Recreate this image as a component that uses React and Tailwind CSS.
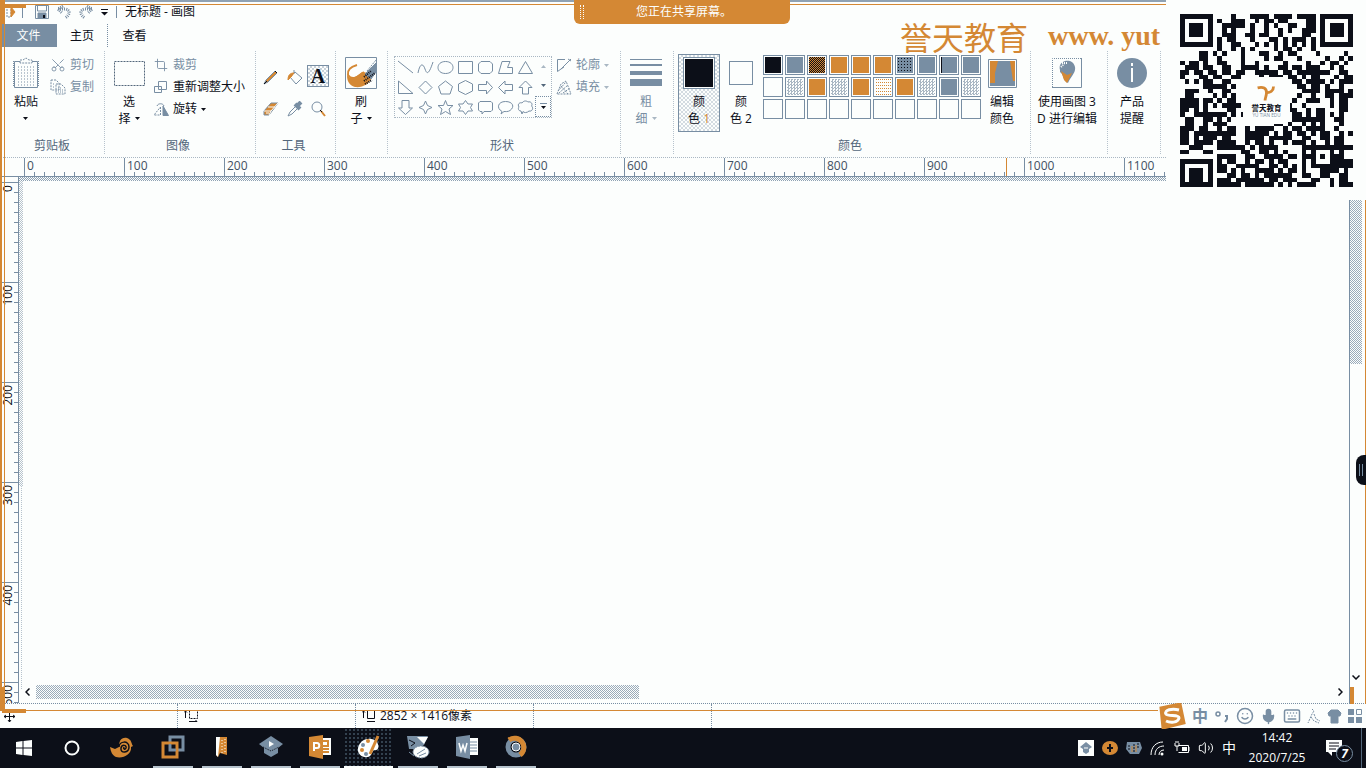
import React from "react";
import { Scissors, Crop, Mic, Keyboard, Smile, Volume2 } from "lucide-react";

const QR = [
  "1111111....1...1111.1111.1111.1111111",
  "1.....1.1..111..1.11.11....11.1.....1",
  "1.111.1..11111.1..1.1..11..11.1.111.1",
  "1.111.1..1.1...1..1..1.1..111.1.111.1",
  "1.111.1..111..11.11..1....11..1.111.1",
  "1.....1.1.11...1...11.1.111.1.1.....1",
  "1111111.1..11...1.1.1.1.1.1.1.1111111",
  "........1..1.1.1....1.11.1..1........",
  "....11.1.1...1...11..1.11....1.....1.",
  "....11..1....1....1.11...1.....1..1.1",
  "1.11.1..11...1..1.....1....1..1.11.1.",
  ".111.11..11..1111.1..11.11.111..1.1..",
  "11.11.11.11.11..11111.11.1111111..11.",
  "1...11.11..11....1.111.11.1.11...1.11",
  ".1.1.11..11..........1..11.1111.1.111",
  ".....11111.1.............11.11.1..1..",
  ".111..1..11...............1111.1111.1",
  ".11....1.1.1.............1..1..11.111",
  "1111.11.1.11............1..111..1.11.",
  "1111.1.1.1111..........1..1.....1.11.",
  "11.1.1....11...........11..1.11...11.",
  "1..1111111.1.1..........11.1.11.1.1..",
  ".11..11.1.1.............1111111..11..",
  ".11..1.111..........11.1..1.1.1...1..",
  "111.11..1.11..1.1111..1.11.1111..1...",
  "11.111111111..11111.1.11.11.1.11..1.1",
  "11.1.111.11...1111.11111..11..11.11..",
  "11.1111.1111..1.11.1..1.111.1..1.11..",
  "..111...111111.1.1111.....11111111111",
  "11...11......11..11.1.1...1.1...1.1..",
  "........1111..11..1111.11.111.1.111..",
  "1111111.1.11..1.11.1.11...1.1...11111",
  "1.....1.11..11111..11.1.1.1.111111111",
  "1.111.1.11.1.1..1111.1.11.1...1111.1.",
  "1.111.1...11.11.1.111111..11..11..11.",
  "1.111.1.111.111111.11.111...11..1.11.",
  "1111111.11111.111111.1.1.1111...1.111",
];

const swatches = [
  "bg-[#0c0f18]", "bg-[#788ea3]", "bg-[repeating-conic-gradient(#0c0f18_0_25%,#d48834_0_50%)] bg-[length:2px_2px]", "bg-[#d48834]", "bg-[#d48834]",
  "bg-[#d48834]", "bg-[radial-gradient(#0c0f18_1px,#788ea3_1px)] bg-[length:3px_3px]", "bg-[#788ea3]", "bg-[#788ea3] border-l border-[#0c0f18]", "bg-[#788ea3]",
  "", "bg-[repeating-conic-gradient(#a9b7c3_0_25%,#fcfefd_0_50%)] bg-[length:3px_3px]", "bg-[#d48834]", "bg-[repeating-conic-gradient(#a9b7c3_0_25%,#fcfefd_0_50%)] bg-[length:3px_3px]", "bg-[#d48834]",
  "bg-[linear-gradient(90deg,#fcfefd_50%,transparent_50%),linear-gradient(#d48834_33%,#fcfefd_33%)] bg-[length:2px_3px]", "bg-[#d48834]", "bg-[repeating-conic-gradient(#a9b7c3_0_25%,#fcfefd_0_50%)] bg-[length:3px_3px]", "bg-[#788ea3]", "bg-[repeating-conic-gradient(#a9b7c3_0_25%,#fcfefd_0_50%)] bg-[length:3px_3px]",
  "", "", "", "", "", "", "", "", "", "",
];

const shapes = [
  ["直线", "M1 1L16 13"],
  ["曲线", "M1 13C3 3 6 3 8 9S12 14 16 2"],
  ["椭圆", "M8.500 1.500C18.500 1.500 18.500 13.500 8.500 13.500S-1.500 1.500 8.500 1.500Z"],
  ["矩形", "M1.500 1.500H15.500V13.500H1.500Z"],
  ["圆角矩形", "M4 1.500H13L15.500 4V11L13 13.500H4L1.500 11V4Z"],
  ["多边形", "M5 1.500H13L10.500 7.500H15.500V13.500H1.500Z"],
  ["三角形", "M8.500 1.500L15.500 13.500H1.500Z"],
  ["直角三角形", "M1.500 1V13.500H16Z"],
  ["菱形", "M8.500 1L15 7.500L8.500 14L2 7.500Z"],
  ["五边形", "M8.500 1L15.500 6.500L13 14H4L1.500 6.500Z"],
  ["六边形", "M8.500 .5L15.500 4V11L8.500 14.500L1.500 11V4Z"],
  ["右箭头", "M1.500 4.500H9.500V1L15.500 7.500L9.500 14V10.500H1.500Z"],
  ["左箭头", "M15.500 4.500H8V1L1.500 7.500L8 14V10.500H15.500Z"],
  ["上箭头", "M8.500 1L15 7.500H11.500V14H5.500V7.500H2Z"],
  ["下箭头", "M8.500 14.500L15.500 8H12V.5H5V8H1.500Z"],
  ["四角星", "M8.500 1L10.500 5.500L15 7.500L10.500 9.500L8.500 14L6.500 9.500L2 7.500L6.500 5.500Z"],
  ["五角星", "M8.500 .5L10.500 5.500H16L12 9L13.500 14.500L8.500 11.500L3.500 14.500L5 9L1 5.500H6.500Z"],
  ["六角星", "M8.500 .5L11 4H15.500L13.500 7.500L15.500 11H11L8.500 14.500L6 11H1.500L3.500 7.500L1.500 4H6Z"],
  ["圆角标注", "M3 1.500H14L15.500 3V10L14 11.500H7L5 14V11.500H3L1.500 10V3Z"],
  ["椭圆标注", "M5 11.500C-1 8 1 1.500 8.500 1.500S18 7 13 10.500C11 12 8 11.500 7 11.500L4 14Z"],
  ["云形标注", "M4 11C1 11 1 8 2 7C0 4 3 2 5 3C7 0 10 1 11 2C14 1 16 4 14.500 6C17 8 15 12 12 11C10 13 7 13 6 11.500L5 14Z"],
];

const Svg = ({ w, h, children, className = "" }) => (
  <svg width={w} height={h} viewBox={`0 0 ${w} ${h}`} className={`shrink-0 ${className}`} fill="none" stroke="#788ea3" aria-hidden="true">
    {children}
  </svg>
);

const Caret = ({ fill = "#0c0f18" }) => (
  <Svg w={5} h={3}><path d="M0 0H5L2.500 3Z" fill={fill} stroke="none" /></Svg>
);

function Group({ label, className, children }) {
  return (
    <section className={`flex shrink-0 flex-col border-r border-dotted border-[#b7c3cd] ${className}`}>
      <div className="flex h-[87px] items-start">{children}</div>
      <h2 className="pr-1 text-center text-xs leading-4 text-[#53677b]">{label}</h2>
    </section>
  );
}

function Tall({ icon, children, className = "" }) {
  return (
    <button className={`flex shrink-0 flex-col items-center ${className}`}>
      <span className="flex h-9 items-center justify-center">{icon}</span>
      <span className="mt-0.5 flex flex-col items-center leading-[17px]">{children}</span>
    </button>
  );
}

const Row = ({ icon, children, className = "" }) => (
  <button className={`flex h-[22px] items-center gap-1 whitespace-nowrap ${className}`}>
    <span className="flex w-4 shrink-0 justify-center">{icon}</span>
    {children}
  </button>
);

function QrCode() {
  return (
    <svg viewBox="0 0 37 37" className="h-[173px] w-[173px]" shapeRendering="crispEdges" role="img" aria-label="誉天教育二维码">
      {QR.map((row, y) =>
        [...row].map((c, x) => c === "1" && <rect key={`${x}-${y}`} x={x} y={y} width="1" height="1" fill="#0c0f18" />)
      )}
      <rect x="13.500" y="13.500" width="10" height="10" rx="1.500" fill="#fcfefd" />
      <g fill="none" stroke="#d48834" strokeWidth=".6" shapeRendering="auto">
        <path d="M16.600 15.800C17.800 15.500 18.500 15.900 18.500 16.800C18.500 17.600 18.200 17.800 18.200 18.500M20 15.500C20 16.400 19.300 16.900 18.500 16.800" />
      </g>
      <text x="18.500" y="20.700" textAnchor="middle" fontSize="1.600" fontWeight="700" fill="#0c0f18">誉天教育</text>
      <text x="18.500" y="22" textAnchor="middle" fontSize="1" fill="#788ea3">YU TIAN EDU</text>
    </svg>
  );
}

function TitleBar() {
  return (
    <div className="flex h-6 items-center pl-1.5 text-xs">
      <Svg w={10} h={14}><path d="M1 2H5V12H1Z" strokeDasharray="2 1" /><path d="M5 2L9 7L5 12Z" fill="#d48834" stroke="#d48834" /></Svg>
      <span className="ml-1.5 h-3 w-px bg-[#788ea3]" />
      <button aria-label="保存" className="ml-3">
        <Svg w={14} h={14}><path d="M.5 .5H13.500V13.500H.5Z" /><path d="M3 8H11V13H3Z" fill="#788ea3" /><path d="M2.500 1V6H11.500V1" /><path d="M8 10H10V13H8Z" fill="#0c0f18" stroke="none" /></Svg>
      </button>
      <button aria-label="撤消" className="ml-2"><Svg w={14} h={14}><path d="M6 1L1 4L5 8M1 4H8C14 5 13 10 8 13" strokeDasharray="1 1" strokeWidth="3" /></Svg></button>
      <button aria-label="重做" className="ml-2"><Svg w={14} h={14}><path d="M8 1L13 4L9 8M13 4H6C0 5 1 10 6 13" strokeDasharray="1 1" strokeWidth="3" /></Svg></button>
      <button aria-label="自定义快速访问工具栏" className="ml-2"><Svg w={7} h={7}><path d="M0 .5H7" stroke="#0c0f18" /><path d="M0 3H7L3.500 6.500Z" fill="#0c0f18" stroke="none" /></Svg></button>
      <span className="ml-2 h-3 w-px bg-[#788ea3]" />
      <h1 className="ml-2">无标题 - 画图</h1>
    </div>
  );
}

function Ribbon() {
  return (
    <div className="flex pt-1 pl-1 text-xs">
      <Group label="剪贴板" className="w-[101px]">
        <Tall className="ml-1 w-9 pt-1" icon={
          <Svg w={26} h={32}>
            <path d="M1.500 4.500H24.500V30.500H1.500Z" />
            <path d="M.5 4V30M25.500 4V30" strokeDasharray="1 1" />
            <path d="M7 6V3H10L13 1L16 3H19V6Z" fill="#fcfefd" strokeDasharray="2 1" />
            <path d="M5 10H22M5 13H22M5 16H22M5 19H22M5 22H22M5 25H22M5 28H22" strokeDasharray="1 2" />
          </Svg>}>
          <span>粘贴</span><span className="flex h-4 items-center"><Caret /></span>
        </Tall>
        <div className="ml-1.5 flex flex-col pt-[3px] text-[#788ea3]">
          <Row icon={<Scissors size={16} strokeWidth={1.3} className="-rotate-90" />}>剪切</Row>
          <Row icon={<Svg w={16} h={16}><path d="M1 1H6L9 4V11H1ZM6 5H11L15 9V15H6Z" strokeDasharray="2 1" /><path d="M8 9H12M8 11H13M8 13H13M3 5H5M3 8H5" strokeDasharray="1 1" /></Svg>}>复制</Row>
        </div>
      </Group>
      <Group label="图像" className="w-[151px]">
        <Tall className="ml-1.5 w-9 pt-1" icon={<Svg w={31} h={25}><path d="M.5 .5H30.500V24.500H.5Z" stroke="#53677b" strokeDasharray="2 1" /></Svg>}>
          <span>选</span><span className="flex items-center gap-1">择<Caret /></span>
        </Tall>
        <div className="ml-1.5 flex flex-col pt-[3px]">
          <Row className="text-[#788ea3]" icon={<Crop size={14} strokeWidth={1.5} />}>裁剪</Row>
          <Row icon={<Svg w={14} h={12}><path d="M4.500 .5H12.500V8.500H4.500ZM.5 5.500H7.500V11.500H.5Z" fill="#fcfefd" /></Svg>}>重新调整大小</Row>
          <Row icon={<Svg w={15} h={13}><path d="M6.500 4V12H0Z" strokeDasharray="2 1" /><path d="M9 3V12.500H14.500Z" fill="#788ea3" /><path d="M3 3C4 0 9 0 10 3" /></Svg>}>旋转 <Caret /></Row>
        </div>
      </Group>
      <Group label="工具" className="w-20">
        <div className="grid grid-cols-3 gap-x-px gap-y-2 pt-3.5 pr-1 pl-[3px]">
          <button aria-label="铅笔" className="grid h-6 w-[23px] place-items-center"><Svg w={16} h={16}><path d="M1 15L3 11L12 2L14 4L5 13Z" fill="#d48834" /><path d="M1 15L4 12M12 2L14 4" stroke="#0c0f18" /></Svg></button>
          <button aria-label="用颜色填充" className="grid h-6 w-[23px] place-items-center"><Svg w={16} h={16}><path d="M7 1V5M8 3L15 9L9 15L3 8Z" /><path d="M7 4C3 4 1 6 1 11L4 8Z" fill="#d48834" stroke="#d48834" /></Svg></button>
          <button aria-label="文本" className="grid h-[22px] w-[22px] place-items-center border border-[#788ea3] bg-[repeating-conic-gradient(#c9d2da_0_25%,#fcfefd_0_50%)] bg-[length:4px_4px] font-['Liberation_Serif',serif] text-xl leading-5 font-bold">A</button>
          <button aria-label="橡皮擦" className="grid h-6 w-[23px] place-items-center"><Svg w={16} h={14}><path d="M1 9L8 1H15L9 9L6 13H1Z" fill="#d48834" /><path d="M1 9H8L15 1M8 9L6 13M5 5L12 5M3 11H6" stroke="#fcfefd" /></Svg></button>
          <button aria-label="颜色选取器" className="grid h-6 w-[23px] place-items-center"><Svg w={16} h={16}><path d="M1 15L3 11L9 5L11 7L5 13Z" /><path d="M8 3L13 8M10 5L14 1" strokeWidth="4" /></Svg></button>
          <button aria-label="放大镜" className="grid h-6 w-[23px] place-items-center"><Svg w={16} h={16}><circle cx="6" cy="6" r="5" /><path d="M10 10L14 15" stroke="#d48834" strokeWidth="2" /><path d="M9 9L11 11" stroke="#0c0f18" /></Svg></button>
        </div>
      </Group>
      <Group label="" className="w-[52px]">
        <Tall className="ml-[7px] w-9 pt-1" icon={
          <Svg w={32} h={32}>
            <path d="M.5 .5H31.500V31.500H.5Z" />
            <path d="M12 8C5 10 2 13 3 18C7 24 13 20 19 15" stroke="#d48834" strokeWidth="2" />
            <path d="M2 18C6 24 11 20 17 15L24 16L27 20C25 27 17 31 10 30C4 28 2 24 2 18Z" fill="#d48834" stroke="none" />
            <path d="M31 6L20 17L26 22L31 15Z" fill="#788ea3" /><path d="M22 14L31 3" strokeDasharray="2 1" /><path d="M19 20L26 14M19 24L30 16M20 27L27 23" stroke="#0c0f18" strokeDasharray="1 1" strokeWidth="2" />
          </Svg>}>
          <span>刷</span><span className="flex items-center gap-1">子<Caret /></span>
        </Tall>
      </Group>
      <Group label="形状" className="w-[233px]">
        <div className="ml-1.5 mt-[5px] flex h-[62px] border border-dotted border-[#a9b7c3]">
          <div className="grid grid-cols-7">
            {shapes.map(([name, d]) => (
              <button key={name} aria-label={name} className="grid h-5 w-5 place-items-center"><Svg w={17} h={15}><path d={d} /></Svg></button>
            ))}
          </div>
          <div className="flex w-4 flex-col">
            <button aria-label="向上滚动形状" className="grid flex-1 place-items-center"><Svg w={5} h={3}><path d="M0 3L2.500 0L5 3Z" fill="#a9b7c3" stroke="none" /></Svg></button>
            <button aria-label="向下滚动形状" className="grid flex-1 place-items-center"><Caret fill="#53677b" /></button>
            <button aria-label="更多形状" className="grid flex-1 place-items-center border border-dotted border-[#788ea3]"><Svg w={7} h={6}><path d="M0 .5H7" /><path d="M1 3H6L3.500 6Z" fill="#0c0f18" stroke="none" /></Svg></button>
          </div>
        </div>
        <div className="ml-1 flex flex-col pt-[3px] text-[#788ea3]">
          <Row icon={<Svg w={15} h={14}><path d="M8 1.500H.5V13.500L4 11L14 1M4 11L7 9M11 1L14 3" /></Svg>}>轮廓 <Caret fill="#a9b7c3" /></Row>
          <Row icon={<Svg w={16} h={15}><path d="M1 14L5 4L10 1L15 14ZM2 11L10 2M3 13L12 5M7 13L14 8M5 6L12 14" strokeDasharray="2 1" /></Svg>}>填充 <Caret fill="#a9b7c3" /></Row>
        </div>
      </Group>
      <Group label="" className="w-[53px] text-[#788ea3]">
        <Tall className="ml-[7px] w-9 pt-1" icon={<Svg w={32} h={28}><path d="M0 0H32V1H0ZM0 5H32V7H0ZM0 12H32V16H0ZM0 20H32V27H0Z" fill="#788ea3" stroke="none" /></Svg>}>
          <span>粗</span><span className="flex items-center gap-1">细<Caret fill="#a9b7c3" /></span>
        </Tall>
      </Group>
      <Group label="颜色" className="w-[357px]">
        <Tall className="mt-[3px] ml-1 h-[78px] w-[42px] border border-[#788ea3] bg-[repeating-conic-gradient(#d3dbe1_0_25%,#fcfefd_0_50%)] bg-[length:4px_4px]" icon={<span className="grid h-8 w-8 place-items-center border border-[#788ea3] bg-[#fcfefd]"><span className="h-7 w-7 bg-[#0c0f18]" /></span>}>
          <span>颜</span><span>色 <span className="text-[#d48834]">1</span></span>
        </Tall>
        <Tall className="ml-[3px] w-9 pt-1" icon={<span className="block h-6 w-6 border border-[#788ea3]" />}>
          <span>颜</span><span>色 2</span>
        </Tall>
        <div className="ml-1 grid grid-cols-10 gap-0.5 pt-1">
          {swatches.map((c, i) => (
            <button key={i} aria-label={`颜色 ${i + 1}`} className="h-5 w-5 border border-[#788ea3] p-px"><span className={`block h-full w-full ${c}`} /></button>
          ))}
        </div>
        <Tall className="ml-[3px] w-9 pt-1" icon={
          <Svg w={29} h={29}><path d="M.5 .5H28.500V28.500H.5Z" /><path d="M2 2H27V27H2Z" fill="#788ea3" stroke="none" /><path d="M2 2H10L7 14V24H2ZM22 2H27V22H25Z" fill="#d48834" stroke="none" /></Svg>}>
          <span>编辑</span><span>颜色</span>
        </Tall>
      </Group>
      <Group label="" className="w-[77px]">
        <Tall className="w-full pt-1 pr-1" icon={
          <Svg w={30} h={30}><path d="M.5 29V.5H29" strokeDasharray="1 1" /><path d="M29.500 0V29.500H0" /><path d="M8 12C5 2 21 -1 23 9C24 15 19 18 16 25C10 22 13 18 8 14Z" fill="#788ea3" stroke="none" /><path d="M9 13L15 17L20 15L15 25L12 22Z" fill="#d48834" stroke="none" /><path d="M9 9L12 6M10 5H16" stroke="#fcfefd" strokeDasharray="1 1" strokeWidth="2" /></Svg>}>
          <span>使用画图 3</span><span>D 进行编辑</span>
        </Tall>
      </Group>
      <Group label="" className="w-[53px]">
        <Tall className="w-full pt-1 pr-1" icon={
          <Svg w={30} h={30}><circle cx="15" cy="15" r="15" fill="#788ea3" stroke="none" /><path d="M15 5V8M15 10V24" stroke="#fcfefd" strokeWidth="2" /></Svg>}>
          <span>产品</span><span>提醒</span>
        </Tall>
      </Group>
    </div>
  );
}

function Canvas() {
  return (
    <div className="flex min-h-0 flex-1">
      <div className="flex w-[19px] shrink-0 flex-col overflow-hidden border-r border-[#788ea3] pt-[5px]">
        {[0, 100, 200, 300, 400, 500].map((n) => (
          <div key={n} className="flex h-[100px] shrink-0 items-start border-t border-[#788ea3] bg-[linear-gradient(#788ea3_1px,transparent_1px)] bg-[length:4px_10px] bg-[position:right_-1px] bg-repeat-y">
            <span className="rotate-180 pb-0.5 text-xs leading-4 [writing-mode:vertical-rl]">{n}</span>
          </div>
        ))}
      </div>
      <div className="flex min-w-0 flex-1 flex-col">
        <main className="min-h-0 flex-1">
          <div className="h-1 bg-[repeating-conic-gradient(#8fa2b3_0_25%,#fcfefd_0_50%)] bg-[length:2px_2px]" />
          <div className="h-3/5 w-1 bg-[repeating-conic-gradient(#b7c3cd_0_25%,#fcfefd_0_50%)] bg-[length:2px_2px]" />
          <div className="ml-0.5 h-2/5 border-l border-dotted border-[#b7c3cd]" />
        </main>
        <div className="flex h-[18px] items-center pb-1">
          <button aria-label="向左滚动" className="grid w-[17px] place-items-center"><Svg w={5} h={8}><path d="M4.500 .5L1 4L4.500 7.500" stroke="#0c0f18" strokeWidth="1.500" /></Svg></button>
          <div className="h-3.5 flex-1"><div className="h-full w-[46.500%] bg-[repeating-conic-gradient(#9aabba_0_25%,#fcfefd_0_50%)] bg-[length:2px_2px]" /></div>
          <button aria-label="向右滚动" className="grid w-[17px] place-items-center"><Svg w={5} h={8}><path d="M.5 .5L4 4L.5 7.500" stroke="#0c0f18" strokeWidth="1.500" /></Svg></button>
        </div>
      </div>
      <div className="flex w-[17px] shrink-0 flex-col border-l border-[#788ea3] pt-[22px] pr-1">
        <div className="flex-1"><div className="h-[35%] bg-[repeating-conic-gradient(#9aabba_0_25%,#fcfefd_0_50%)] bg-[length:2px_2px]" /></div>
        <button aria-label="向下滚动" className="mb-5 grid h-3 place-items-center"><Svg w={8} h={5}><path d="M.5 .5L4 4L7.500 .5" stroke="#0c0f18" strokeWidth="1.500" /></Svg></button>
      </div>
    </div>
  );
}

function StatusBar() {
  return (
    <footer className="flex h-[25px] shrink-0 items-center border-t border-dotted border-[#788ea3] text-xs text-[#0c0f18]">
      <div className="flex h-full w-[178px] items-center border-r border-dotted border-[#788ea3] pl-1">
        <Svg w={11} h={11}><path d="M5.500 0V11M0 5.500H11M4 2L5.500 0L7 2M4 9L5.500 11L7 9M2 4L0 5.500L2 7M9 4L11 5.500L9 7" stroke="#0c0f18" /></Svg>
      </div>
      <div className="flex h-full w-[178px] items-center border-r border-dotted border-[#788ea3] pl-1.5">
        <Svg w={14} h={12}><path d="M1.500 1V8M0 2.500L1.500 1L3 2.500M5 11.500H13M11.500 10L13 11.500" stroke="#0c0f18" /><path d="M5.500 .5H13.500V8.500H5.500Z" stroke="#0c0f18" strokeDasharray="2 1" /></Svg>
      </div>
      <div className="flex h-full w-[178px] items-center gap-1 border-r border-dotted border-[#788ea3] pl-1.5">
        <Svg w={14} h={12}><path d="M1.500 1V8M0 2.500L1.500 1L3 2.500M5 11.500H13M5.500 .5H12.500V8.500H5.500Z" stroke="#0c0f18" /></Svg>
        <span>2852 × 1416像素</span>
      </div>
      <div className="h-full w-[178px] border-r border-dotted border-[#788ea3]" />
      <div className="z-10 ml-auto flex h-full items-center gap-1.5 bg-[#fcfefd] pr-1 text-[#788ea3]">
        <Svg w={28} h={26}><path d="M3 5L22 1L26 20L5 25Z" fill="#d48834" stroke="#d48834" strokeWidth="3" /><path d="M21 7C14 5 6 7 8 11C10 14 21 11 21 15C20 20 12 20 8 18" stroke="#fcfefd" strokeWidth="3" /></Svg>
        <button className="w-4 text-base leading-4 font-bold">中</button>
        <button aria-label="标点" className="grid w-4 place-items-center"><Svg w={14} h={14}><circle cx="3" cy="5" r="2" strokeWidth="1.500" /><path d="M10 7H12V10L10 13" strokeWidth="2" /></Svg></button>
        <button aria-label="表情"><Smile size={18} /></button>
        <button aria-label="语音"><Mic size={17} fill="currentColor" /></button>
        <button aria-label="软键盘"><Keyboard size={18} /></button>
        <button aria-label="登录"><Svg w={14} h={16}><path d="M5 1L7 3L5 6L1 15M7 6L9 11L13 13M4 9L7 13L12 15" strokeDasharray="2 1" /></Svg></button>
        <button aria-label="皮肤"><Svg w={15} h={15}><path d="M4 1H11L14 4L13 7H11V14H4V7H2L1 4Z" fill="#788ea3" /></Svg></button>
        <button aria-label="工具箱"><Svg w={14} h={14}><path d="M0 0H6V6H0ZM0 8H6V14H0ZM8 8H14V14H8Z" fill="#788ea3" stroke="none" /><path d="M8.500 .5H13.500V5.500H8.500Z" /></Svg></button>
      </div>
    </footer>
  );
}

const apps = [
  ["VMware", <><path d="M9 2H22V15H9Z" strokeWidth="3" /><path d="M2 8H16V22H2Z" stroke="#d48834" strokeWidth="3" /><path d="M9 9V15H15" strokeWidth="2" /></>],
  ["记事本", <><path d="M6 2H17V20L10 18L8 22L6 20Z" fill="#d48834" stroke="none" /><path d="M6 2H10L8 22L6 20Z" fill="#fcfefd" stroke="none" /><path d="M12 5V18M15 4V18" stroke="#fcfefd" strokeDasharray="1 2" /></>],
  ["课堂", <><path d="M12 1L24 9L19 13V18L12 22L5 18V13L0 9Z" fill="#788ea3" stroke="none" /><path d="M4 12L12 16L20 12" stroke="#0c0f18" strokeDasharray="1 1" /><path d="M10 6L15 9L10 12Z" fill="#fcfefd" stroke="none" /></>],
  ["PowerPoint", <><path d="M13 3H23V20H13Z" fill="#fcfefd" stroke="none" /><path d="M14 6H20V11H14M15 14H21M15 17H21" stroke="#d48834" strokeWidth="2" /><path d="M1 2L15 0V24L1 21Z" fill="#d48834" stroke="none" /><path d="M6 16V8H9C12 8 12 13 9 13H6" stroke="#fcfefd" strokeWidth="2" /></>],
  ["画图", <><path d="M1 13C3 3 15 1 20 7C23 12 21 16 17 15C15 16 15 21 11 22C5 23 0 19 1 13Z" fill="#fcfefd" stroke="none" /><path d="M21 1L13 19" stroke="#d48834" strokeWidth="3" /><circle cx="6" cy="10" r="2" fill="#788ea3" stroke="none" /><circle cx="11" cy="6" r="2" fill="#d48834" stroke="none" /><circle cx="5" cy="15" r="2" fill="#d48834" stroke="none" /><circle cx="9" cy="19" r="2" fill="#788ea3" stroke="none" /></>],
  ["远程终端", <><path d="M1 1H22L18 10L12 14H3Z" fill="#788ea3" stroke="none" /><path d="M11 2H22L18 9Z" fill="#fcfefd" stroke="none" /><path d="M3 5L9 8L5 11" stroke="#0c0f18" /><ellipse cx="15" cy="17" rx="8" ry="6" fill="#fcfefd" strokeDasharray="2 1" /><path d="M11 19L19 14M13 21L20 18M3 17L8 21" /></>],
  ["Word", <><path d="M13 3H23V20H13Z" fill="#fcfefd" stroke="none" /><path d="M15 7H22M15 10H22M15 13H22M15 16H22" /><path d="M1 2L15 0V24L1 21Z" fill="#788ea3" stroke="none" /><path d="M4 8L6 16L8 10L10 16L12 8" stroke="#fcfefd" strokeWidth="1.500" /></>],
  ["浏览器", <><circle cx="12" cy="12" r="8" strokeWidth="5" /><path d="M5 5A9 9 0 1 1 16 20" stroke="#d48834" strokeWidth="5" /><circle cx="12" cy="12" r="4" fill="#788ea3" stroke="#fcfefd" /></>],
];

function Taskbar() {
  return (
    <nav aria-label="任务栏" className="flex h-10 shrink-0 items-center bg-[#0c0f18] text-xs text-[#fcfefd]">
      <button aria-label="开始" className="grid w-12 place-items-center"><Svg w={16} h={16}><path d="M0 2L6.500 1V7.500H0ZM7.500 1L16 0V7.500H7.500ZM0 8.500H6.500V15L0 14ZM7.500 8.500H16V16L7.500 15Z" fill="#fcfefd" stroke="none" /></Svg></button>
      <button aria-label="搜索" className="grid w-12 place-items-center"><Svg w={16} h={16}><circle cx="8" cy="8" r="6.500" stroke="#fcfefd" strokeWidth="2" /></Svg></button>
      <button aria-label="海螺" className="grid w-[52px] place-items-center"><Svg w={24} h={22}><path d="M0 10L5 12L9 10C9 4 11 0 17 1C22 3 21 6 23 9L21 10C22 17 13 22 6 20C2 18 1 15 0 10Z" fill="#d48834" stroke="none" /><path d="M9 10C9 4 19 3 19 10C19 16 10 17 11 11C12 7 17 8 16 11C15 13 13 12 14 10" stroke="#0c0f18" strokeWidth="1.500" /></Svg></button>
      <div className="flex h-full">
        {apps.map(([name, art]) => (
          <button key={name} aria-label={name} className={`flex h-full w-[49px] flex-col items-center ${name === "画图" ? "bg-[radial-gradient(#33414f_1px,#0c0f18_1px)] bg-[length:4px_4px]" : ""}`}>
            <span className="grid flex-1 place-items-center"><Svg w={24} h={24}>{art}</Svg></span>
            <span className={name === "画图" ? "h-0.5 w-full bg-[#fcfefd]" : "h-0.5 w-10 bg-[#b7c3cd]"} />
          </button>
        ))}
      </div>
      <div className="ml-auto flex h-full items-center gap-2">
        <Svg w={16} h={16}><path d="M0 0H16V16H0Z" fill="#fcfefd" stroke="none" /><path d="M8 2L14 7L11 9V12L8 14L5 12V9L2 7Z" fill="#788ea3" stroke="none" /><path d="M6 8H10" stroke="#fcfefd" /></Svg>
        <Svg w={16} h={16}><ellipse cx="8" cy="8" rx="8" ry="7" fill="#d48834" stroke="none" /><path d="M8 4V12M5 8H11" stroke="#0c0f18" strokeWidth="2" /></Svg>
        <Svg w={16} h={16}><path d="M1 2H14L16 8L13 14H4L0 9Z" fill="#788ea3" stroke="none" /><path d="M3 5V11M8 4V13M12 3V8" stroke="#0c0f18" strokeDasharray="2 1" /><path d="M6 6V12M10 5V12" stroke="#d48834" /></Svg>
        <Svg w={16} h={16}><path d="M1 15C1 7 6 2 13 2M5 15C5 9 9 6 14 6M9 15C9 12 11 10 14 10" stroke="#fcfefd" /><circle cx="12" cy="14" r="1.500" fill="#fcfefd" stroke="none" /></Svg>
        <Svg w={16} h={14}><path d="M4.500 4.500H14.500V11.500H4.500M15 6V10M1 2V5H5V2M3 5V10M2 0V2M4 0V2" stroke="#fcfefd" /><path d="M8 6H13V10H8Z" fill="#fcfefd" stroke="none" /></Svg>
        <Volume2 size={16} strokeWidth={1.5} />
        <button className="w-3.5 text-sm leading-4">中</button>
        <time className="mr-[5px] w-[66px] text-center leading-5">14:42<br />2020/7/25</time>
        <button aria-label="通知，7 条" className="relative ml-0.5 h-7 w-7">
          <Svg w={18} h={18}><path d="M1 1H17V13H7V17L3 13H1Z" fill="#fcfefd" stroke="none" /><path d="M4 4H14M4 7H14M4 10H11" stroke="#0c0f18" /></Svg>
          <span className="absolute right-0 bottom-0 grid h-[17px] w-[17px] place-items-center rounded-full border border-[#788ea3] bg-[#0c0f18] font-bold italic">7</span>
        </button>
        <span className="mr-1 h-full w-px bg-[#53677b]" />
      </div>
    </nav>
  );
}

export default function App() {
  return (
    <div className="relative flex h-screen min-h-[600px] flex-col overflow-hidden bg-[#fcfefd] font-['Open_Sans','Noto_Sans_CJK_SC',sans-serif] text-[#0c0f18]">
      <header className="shrink-0 overflow-hidden pr-[200px]">
        <TitleBar />
        <div className="flex h-[23px] items-center text-xs" role="tablist">
          <button role="tab" className="h-[23px] w-[57px] bg-[#788ea3] text-[#fcfefd]">文件</button>
          <button role="tab" aria-selected="true" className="h-[23px] w-[51px] border-r border-dotted border-[#788ea3]">主页</button>
          <button role="tab" className="h-[23px] w-[53px]">查看</button>
        </div>
        <div className="h-[110px]">
          <Ribbon />
        </div>
        <div className="relative flex h-5 overflow-hidden border-t border-b border-t-[#a9b7c3] border-b-[#788ea3] [border-top-style:dotted] pl-6">
          {[0, 100, 200, 300, 400, 500, 600, 700, 800, 900, 1000, 1100].map((n) => (
            <div key={n} className="w-[100px] shrink-0 border-l border-[#788ea3] bg-[linear-gradient(90deg,#788ea3_1px,transparent_1px)] bg-[length:10px_4px] bg-[position:-1px_bottom] bg-repeat-x pl-0.5 text-xs leading-4 text-[#3f5062]">{n}</div>
          ))}
          <span className="absolute top-0 left-[1006px] h-full w-px bg-[#d48834]" />
        </div>
      </header>
      <Canvas />
      <StatusBar />
      <Taskbar />

      <div className="pointer-events-none absolute inset-x-0 top-0 bottom-[57px] border-l-2 border-[#d48834]">
        <div className="h-full border-t-2 border-[#8fa2b3] pt-0.5 pl-0.5">
          <div className="h-full border border-[#d48834]" />
        </div>
        <span className="absolute top-0 left-0 h-6 w-[3px] bg-[#d48834]" />
        <span className="absolute top-1 left-0 h-1 w-6 bg-[#d48834]" />
        <span className="absolute bottom-0 left-0 h-6 w-[3px] bg-[#d48834]" />
        <span className="absolute -bottom-0.5 left-0 h-1 w-6 bg-[#d48834]" />
        <span className="absolute right-3 bottom-1 h-5 w-1 bg-[#d48834]" />
      </div>
      <div className="absolute top-0 left-[574px] flex h-6 w-[216px] items-center rounded-b-md bg-[#d48834] pr-1.5 text-xs text-[#fcfefd]">
        <span className="ml-1.5 h-3.5 w-1 border-x border-dotted border-[#fcfefd]" />
        <span className="flex-1 text-center">您正在共享屏幕。</span>
      </div>
      <p className="absolute top-[18px] left-[900px] flex items-center gap-5 leading-9 whitespace-nowrap text-[#d48834]">
        <span className="font-['Noto_Sans_CJK_SC',sans-serif] text-[32px]">誉天教育</span>
        <span className="font-['Liberation_Serif',serif] text-[28px] font-bold">www. yut</span>
      </p>
      <aside className="absolute top-0 right-0 flex h-[200px] w-[200px] items-start justify-center bg-[#fcfefd] pt-3.5">
        <QrCode />
      </aside>
      <button aria-label="展开侧栏" className="absolute top-[455px] right-0 flex h-[30px] w-2.5 items-center justify-center gap-0.5 rounded-l-lg bg-[#0c0f18]">
        <span className="h-3 w-px bg-[#788ea3]" /><span className="h-3 w-px bg-[#788ea3]" />
      </button>
    </div>
  );
}
